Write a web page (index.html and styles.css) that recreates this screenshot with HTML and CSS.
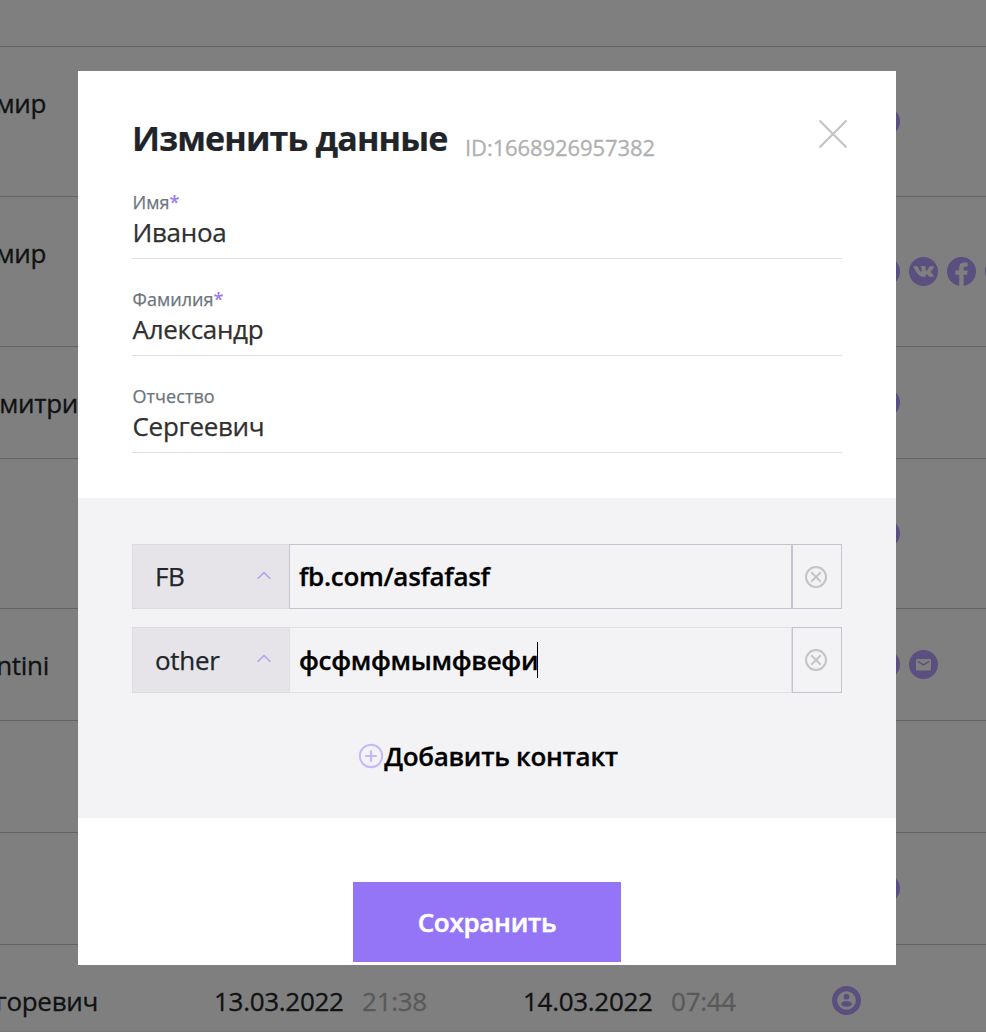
FILE: index.html
```html
<!DOCTYPE html>
<html lang="ru">
<head>
<meta charset="utf-8">
<title>Изменить данные</title>
<link rel="stylesheet" href="styles.css">
</head>
<body>
<svg class="defs" width="0" height="0">
  <symbol id="vk" viewBox="0 0 29 29"><circle cx="14.5" cy="14.5" r="14.5" fill="#b79eff"/><path fill="#fff" d="M4.8 9.3h3.4c.6 0 .8.3 1 .9.8 2.3 2 4.3 2.8 4.3.4 0 .6-.4.6-1.5v-1.800c-.1-1.100-.9-1.200-.9-1.600 0-.3.3-.5.6-.5h3.700c.5 0 .7.3.7.9v3.300c0 .5.2.7.4.7.3 0 .6-.2 1-.7 1-1.200 1.700-2.600 2.100-3.400.2-.4.5-.6.9-.6h3.100c.6 0 .8.4.6.900-.5 1.200-2 3.100-2.800 4.200-.3.4-.4.6 0 1 .5.600 2.300 2.200 2.700 3.300.2.600 0 1.100-.8 1.100h-2.800c-.7 0-1-.3-1.700-1.100-.7-.8-1.300-1.500-1.900-1.500-.5 0-.7.3-.7 1.300 0 .9-.3 1.300-1.300 1.300-3 0-5.500-1.200-7.500-3.900C6 13.200 5 11.100 4.400 10c-.2-.4 0-.7.4-.7z"/></symbol>
  <symbol id="fb" viewBox="0 0 29 29"><circle cx="14.5" cy="14.5" r="14.5" fill="#b79eff"/><path fill="#fff" d="M12.200 29V17.700H8.400V13.600h3.800v-2.800c0-3.500 2.100-5.200 5.300-5.200 1.400 0 2.700.2 3.200.3v3.600h-1.900c-1.800 0-2.200.9-2.200 2.200v1.900h4.100l-.7 4.100h-3.400V29z"/></symbol>
  <symbol id="mail" viewBox="0 0 29 29"><circle cx="14.5" cy="14.500" r="14.500" fill="#b79eff"/><rect x="7" y="9" width="15" height="11.500" rx="1.200" fill="#fff"/><path d="M8.800 11.300l5.700 3.500 5.700-3.500" fill="none" stroke="#b79eff" stroke-width="1.500"/></symbol>
  <symbol id="user" viewBox="0 0 29 29"><circle cx="14.500" cy="14.500" r="14.500" fill="#b79eff"/><circle cx="14.500" cy="14.500" r="9.300" fill="#fff"/><circle cx="14.500" cy="10.700" r="2.900" fill="#b79eff"/><ellipse cx="14.500" cy="17.900" rx="5.500" ry="2.800" fill="#b79eff"/></symbol>
  <symbol id="remove" viewBox="0 0 24 24"><circle cx="12" cy="12" r="10" fill="none" stroke="#c4c4c4" stroke-width="2"/><path d="M7.200 7.200l9.600 9.600M16.800 7.200l-9.600 9.600" stroke="#c4c4c4" stroke-width="2" fill="none"/></symbol>
  <symbol id="chevron" viewBox="0 0 14 9"><path d="M.7 7.800L7 1.500l6.300 6.300" fill="none" stroke="#b09cf2" stroke-width="1.400"/></symbol>
</svg>

<main class="table">
  <div class="row row-head"></div>
  <div class="row tall"><div class="name name-short">мир</div><div class="icons"><svg><use href="#user"/></svg><svg><use href="#user"/></svg></div></div>
  <div class="row tall"><div class="name name-short">мир</div><div class="icons"><svg><use href="#user"/></svg><svg><use href="#user"/></svg><svg><use href="#vk"/></svg><svg><use href="#fb"/></svg><svg><use href="#user"/></svg></div></div>
  <div class="row"><div class="name name-wide">митри</div><div class="icons"><svg><use href="#user"/></svg><svg><use href="#user"/></svg></div></div>
  <div class="row tall"><div class="name"></div><div class="icons"><svg><use href="#user"/></svg><svg><use href="#user"/></svg></div></div>
  <div class="row"><div class="name name-latin">ntini</div><div class="icons"><svg><use href="#user"/></svg><svg><use href="#user"/></svg><svg><use href="#mail"/></svg></div></div>
  <div class="row"></div>
  <div class="row"><div class="name"></div><div class="icons"><svg><use href="#user"/></svg><svg><use href="#user"/></svg></div></div>
  <div class="row row-last"><div class="name name-long">горевич</div>
    <div class="date date-created">13.03.2022<span class="time">21:38</span></div>
    <div class="date date-changed">14.03.2022<span class="time">07:44</span></div>
    <div class="icons"><svg><use href="#user"/></svg></div></div>
</main>

<div class="overlay">
  <section class="modal">
    <header class="head">
      <h1 class="title">Изменить данные</h1>
      <span class="id">ID:1668926957382</span>
      <svg class="close" viewBox="0 0 30 30"><path d="M1.500 1.500l27 27M28.500 1.500l-27 27" stroke="#c4c4c4" stroke-width="2.200" fill="none"/></svg>
    </header>
    <div class="fields">
      <div class="field"><div class="label">Имя<span class="star">*</span></div><div class="value">Иваноа</div></div>
      <div class="field"><div class="label">Фамилия<span class="star">*</span></div><div class="value">Александр</div></div>
      <div class="field"><div class="label">Отчество</div><div class="value">Сергеевич</div></div>
    </div>
    <div class="contacts">
      <div class="contact contact-first">
        <div class="type">FB<svg class="chevron"><use href="#chevron"/></svg></div>
        <div class="link link-strong">fb.com/asfafasf</div>
        <div class="remove"><svg><use href="#remove"/></svg></div>
      </div>
      <div class="contact">
        <div class="type">other<svg class="chevron"><use href="#chevron"/></svg></div>
        <div class="link">фсфмфмымфвефи<span class="caret"></span></div>
        <div class="remove"><svg><use href="#remove"/></svg></div>
      </div>
      <div class="add"><svg viewBox="0 0 26 26"><circle cx="13" cy="13" r="11.200" fill="none" stroke="#c8b8fa" stroke-width="2"/><path d="M13 8v10M8 13h10" fill="none" stroke="#c8b8fa" stroke-width="2.200" stroke-linecap="round"/></svg><span>Добавить контакт</span></div>
    </div>
    <div class="footer"><div class="save">Сохранить</div></div>
  </section>
</div>
</body>
</html>
```

FILE: styles.css
```css
* { box-sizing: border-box; }
body {
  margin: 0;
  width: 986px;
  height: 1032px;
  overflow: hidden;
  font-family: "Open Sans", "Noto Sans", sans-serif;
  font-size: 26px;
  line-height: 36px;
  letter-spacing: -.3px;
  color: #212529;
  background: #fff;
}
.defs { position: absolute; }
.table { height: 1032px; overflow: hidden; }
.row { display: flex; height: 112px; border-bottom: 1px solid #c8c5d1; white-space: nowrap; }
.row-head { height: 47px; }
.tall { height: 150px; }
.row-last { height: 87px; border-bottom-color: #f3f0f6; }
.name { flex: none; width: 46px; height: 36px; margin-top: 38px; display: flex; justify-content: flex-end; -webkit-text-stroke: .3px; }
.name-short { width: 46px; }
.name-wide { width: 78px; }
.name-latin { width: 49px; }
.name-long { width: 98px; }
.icons { display: flex; align-items: center; gap: 9px; margin-left: auto; flex: none; width: 153px; }
.icons svg { width: 29px; height: 29px; flex: none; }
.row-last .icons { height: 111px; width: 154px; }
.date { margin-top: 38px; flex: none; -webkit-text-stroke: .3px; }
.date-created { margin-left: 116px; width: 309px; }
.time { margin-left: 18.500px; color: #b3b3b3; }

.overlay { position: absolute; inset: 0; padding: 71px 0 0 78px; background: rgba(0, 0, 0, .5); }
.modal { width: 818px; height: 894px; background: #fff; overflow: hidden; }
.head { display: flex; padding: 41px 48px 0 54px; height: 118px; }
.title { margin: 0; font-size: 34px; line-height: 52px; font-weight: 700; letter-spacing: -.85px; white-space: nowrap; -webkit-text-stroke: .2px; }
.id { margin: 19px 0 0 17.500px; font-size: 22px; line-height: 32px; letter-spacing: -.1px; color: #b0b0b0; -webkit-text-stroke: .3px; }
.close { width: 30px; height: 30px; margin: 6.500px 0 0 auto; }
.fields { padding: 0 54px; height: 309px; }
.field { height: 70px; margin-bottom: 27px; border-bottom: 1px solid #dfdfe6; }
.label { padding-left: .5px; font-size: 18px; line-height: 26px; letter-spacing: .05px; color: #6c757d; -webkit-text-stroke: .25px; }
.star { color: #9575f7; }
.value { margin-top: -1px; padding-left: .5px; line-height: 36px; color: #303030; -webkit-text-stroke: .25px; }
.contacts { height: 320px; padding: 46px 54px 0; background: #f3f3f6; }
.contact { display: flex; height: 66px; }
.contact-first { height: 65px; margin-bottom: 18px; }
.type { width: 157px; padding: 0 18px 0 22px; display: flex; align-items: center; justify-content: space-between; background: #e6e4e9; border: 1px solid #dcdcdf; border-right: 0; -webkit-text-stroke: .25px; }
.contact-first .type, .contact-first .link { padding-bottom: 2px; }
.chevron { width: 14px; height: 9px; margin-top: -4px; }
.contact-first .chevron { margin-top: -1px; }
.link { width: 503px; padding-left: 9px; display: flex; align-items: center; font-weight: 600; color: #000; border: 1px solid #dedee4; -webkit-text-stroke: .3px; }
.link-strong { border-color: #c5c4d0; }
.caret { width: 1px; height: 36px; margin-left: -1px; background: #000; }
.remove { width: 50px; padding-right: 2px; display: flex; align-items: center; justify-content: center; border: 1px solid #c5c4d0; }
.remove svg { width: 24px; height: 24px; }
.add { display: flex; align-items: center; justify-content: center; height: 36px; margin-top: 45px; padding-left: 2px; font-weight: 600; color: #000; -webkit-text-stroke: .3px; }
.add svg { width: 26px; height: 26px; margin-top: -1px; }
.footer { padding-top: 64px; display: flex; justify-content: center; }
.save { width: 268px; height: 80px; display: flex; align-items: center; justify-content: center; background: #9575f7; color: #fff; font-weight: 600; -webkit-text-stroke: .5px; }
```
